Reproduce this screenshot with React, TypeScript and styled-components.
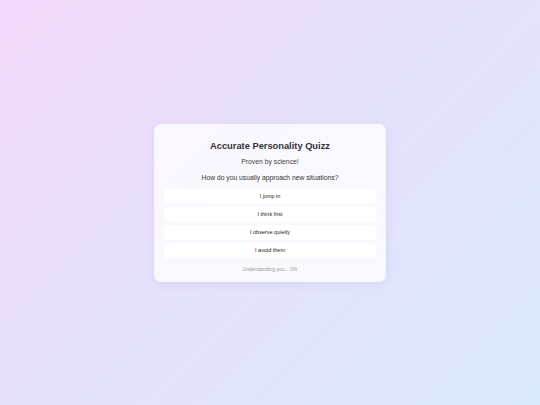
import React from 'react'
import styled, { createGlobalStyle } from 'styled-components'

const GlobalStyle = createGlobalStyle`
  html, body {
    margin: 0;
    padding: 0;
    height: 100%;
  }
  #root {
    height: 100%;
  }
  body {
    font-family: "Liberation Sans", Arial, sans-serif;
  }
`

const options = ['I jump in', 'I think first', 'I observe quietly', 'I avoid them']

const App: React.FC = () => {
  return (
    <>
      <GlobalStyle />
      <Page>
        <Card>
          <Title>Accurate Personality Quizz</Title>
          <Subtitle>Proven by science!</Subtitle>
          <Question>How do you usually approach new situations?</Question>
          <Options>
            {options.map((o) => (
              <Option key={o}>{o}</Option>
            ))}
          </Options>
          <Progress>Understanding you... 0%</Progress>
        </Card>
      </Page>
    </>
  )
}

export default App

const Page = styled.div`
  width: 100%;
  height: 100%;
  min-height: 405px;
  display: flex;
  align-items: center;
  justify-content: center;
  background: linear-gradient(135deg, #f4d9fc 0%, #e5e2fb 50%, #dbeafe 100%);
`

const Card = styled.div`
  width: 232px;
  box-sizing: border-box;
  padding: 16px 10px 9px;
  background: rgba(255, 255, 255, 0.75);
  border-radius: 7px;
  box-shadow: 0 2px 8px rgba(120, 100, 170, 0.12);
  display: flex;
  flex-direction: column;
  align-items: stretch;
  text-align: center;
`

const Title = styled.h1`
  margin: 0;
  font-size: 9.3px;
  font-weight: 700;
  color: #333;
  line-height: 12px;
`

const Subtitle = styled.p`
  margin: 5.5px 0 0;
  font-size: 6.8px;
  color: #444;
  line-height: 9px;
`

const Question = styled.p`
  margin: 7px 0 0;
  font-size: 6.75px;
  color: #333;
  line-height: 9px;
`

const Options = styled.div`
  margin-top: 6.5px;
  display: flex;
  flex-direction: column;
  gap: 3px;
`

const Option = styled.button`
  height: 15px;
  border: none;
  border-radius: 3px;
  background: #ffffff;
  font-family: "Liberation Sans", Arial, sans-serif;
  font-size: 5.5px;
  color: #222;
  padding: 0;
  cursor: pointer;
`

const Progress = styled.div`
  margin-top: 7px;
  font-size: 5px;
  color: #999;
  line-height: 8px;
`
